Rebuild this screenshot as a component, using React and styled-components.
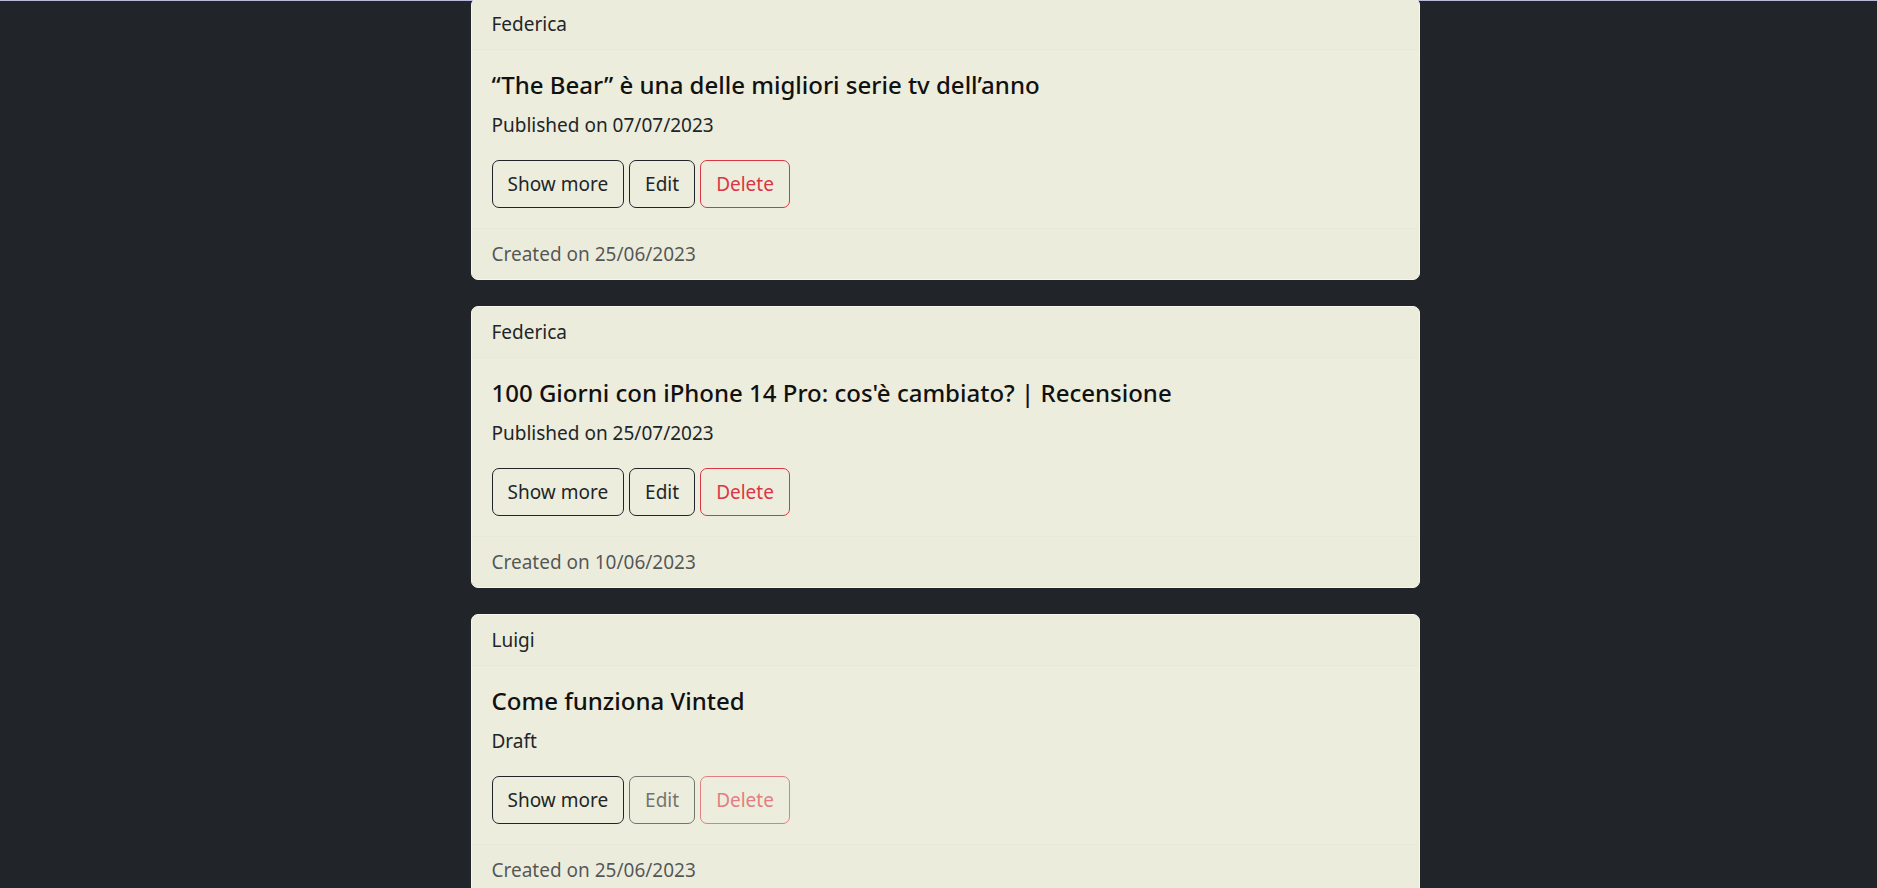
import React from 'react';
import styled, { createGlobalStyle, css } from 'styled-components';

const GlobalStyle = createGlobalStyle`
  html, body {
    margin: 0;
    padding: 0;
    background: #212529;
  }

  body {
    font-family: "Noto Sans", "Segoe UI", "Liberation Sans", sans-serif;
    color: #212529;
    overflow: hidden;
  }
`;

const Page = styled.main`
  min-height: 100vh;
  border-top: 1px solid #b9b8dc;
  box-sizing: border-box;
  display: flex;
  flex-direction: column;
  align-items: center;
  padding-left: 13px;
`;

const PostList = styled.div`
  display: flex;
  flex-direction: column;
  gap: 26px;
  width: 949px;
  margin-top: -3px;
`;

const Card = styled.article`
  background: #ededdd;
  border: 1px solid #f6f6ef;
  border-radius: 7px;
  overflow: hidden;
  display: flex;
  flex-direction: column;
`;

const CardHeader = styled.header`
  padding: 10px 20px;
  line-height: 30px;
  font-size: 19px;
  background: rgba(33, 37, 41, 0.004);
  border-bottom: 1px solid rgba(33, 37, 41, 0.01);
`;

const CardBody = styled.div`
  padding: 20px;
`;

const Title = styled.h5`
  margin: 0 0 10px;
  font-size: 24px;
  font-weight: 500;
  line-height: 30px;
  color: #111;
`;

const Status = styled.p`
  margin: 0 0 20px;
  font-size: 19px;
  line-height: 30px;
`;

const Actions = styled.div`
  display: flex;
  gap: 5px;
`;

const variants = {
  dark: css`
    color: #212529;
    border-color: #212529;
  `,
  danger: css`
    color: #dc3545;
    border-color: #dc3545;
  `,
};

const Button = styled.button`
  font-family: inherit;
  font-size: 19px;
  line-height: 30px;
  padding: 8px 15px;
  background: transparent;
  border: 1px solid;
  border-radius: 7px;
  cursor: pointer;
  ${({ $variant }) => variants[$variant]}
  ${({ disabled }) =>
    disabled &&
    css`
      opacity: 0.6;
      cursor: default;
    `}
`;

const CardFooter = styled.footer`
  padding: 10px 20px;
  line-height: 30px;
  font-size: 19px;
  color: rgba(33, 37, 41, 0.75);
  background: rgba(33, 37, 41, 0.004);
  border-top: 1px solid rgba(33, 37, 41, 0.01);
`;

const posts = [
  {
    author: 'Federica',
    title: '“The Bear” è una delle migliori serie tv dell’anno',
    published: '07/07/2023',
    created: '25/06/2023',
  },
  {
    author: 'Federica',
    title: "100 Giorni con iPhone 14 Pro: cos'è cambiato? | Recensione",
    published: '25/07/2023',
    created: '10/06/2023',
  },
  {
    author: 'Luigi',
    title: 'Come funziona Vinted',
    published: null,
    created: '25/06/2023',
  },
];

const PostCard = ({ post }) => {
  const isDraft = !post.published;

  return (
    <Card>
      <CardHeader>{post.author}</CardHeader>
      <CardBody>
        <Title>{post.title}</Title>
        <Status>{isDraft ? 'Draft' : `Published on ${post.published}`}</Status>
        <Actions>
          <Button $variant="dark">Show more</Button>
          <Button $variant="dark" disabled={isDraft}>
            Edit
          </Button>
          <Button $variant="danger" disabled={isDraft}>
            Delete
          </Button>
        </Actions>
      </CardBody>
      <CardFooter>Created on {post.created}</CardFooter>
    </Card>
  );
};

const App = () => (
  <>
    <GlobalStyle />
    <Page>
      <PostList>
        {posts.map((post, index) => (
          <PostCard key={index} post={post} />
        ))}
      </PostList>
    </Page>
  </>
);

export default App;
